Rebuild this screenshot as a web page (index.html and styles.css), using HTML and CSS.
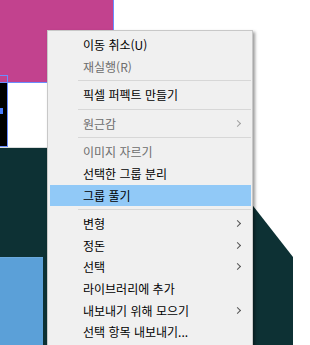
FILE: index.html
```html
<!DOCTYPE html>
<html lang="ko">
<head>
  <meta charset="UTF-8" />
  <title>Context menu</title>
  <link rel="stylesheet" href="styles.css">
</head>
<body>
  <div class="canvas">
    <div class="shape magenta"></div>
    <div class="shape black-box"></div>
    <div class="shape black-outline"></div>
    <div class="shape handle"></div>
    <div class="shape teal"></div>
    <div class="shape sky"></div>

    <div class="menu">
      <div class="item">이동 취소(U)</div>
      <div class="item disabled">재실행(R)</div>
      <div class="sep"></div>
      <div class="item">픽셀 퍼펙트 만들기</div>
      <div class="sep"></div>
      <div class="item disabled sub">원근감</div>
      <div class="sep"></div>
      <div class="item disabled">이미지 자르기</div>
      <div class="item">선택한 그룹 분리</div>
      <div class="item active">그룹 풀기</div>
      <div class="sep"></div>
      <div class="item sub">변형</div>
      <div class="item sub">정돈</div>
      <div class="item sub">선택</div>
      <div class="item">라이브러리에 추가</div>
      <div class="item sub">내보내기 위해 모으기</div>
      <div class="item">선택 항목 내보내기...</div>
    </div>
  </div>
</body>
</html>
```

FILE: styles.css
```css
* {
  margin: 0;
  padding: 0;
  box-sizing: border-box;
}

html, body {
  width: 100%;
  height: 100%;
  background: #fff;
  overflow: hidden;
}

.canvas {
  position: relative;
  width: 310px;
  height: 345px;
}

.shape {
  position: absolute;
}

.magenta {
  left: 0;
  top: 0;
  width: 114px;
  height: 83px;
  background: #c2428e;
  border-right: 1px solid #6a8cff;
  border-bottom: 1px solid #6a8cff;
}

.black-box {
  left: 0;
  top: 83px;
  width: 7px;
  height: 64px;
  background: #000;
}

.black-outline {
  left: -2px;
  top: 75px;
  width: 10px;
  height: 72px;
  border: 1px solid #6a8cff;
}

.handle {
  left: 0;
  top: 108px;
  width: 3px;
  height: 6px;
  background: #4a7cff;
}

.teal {
  left: 0;
  top: 147px;
  width: 293px;
  height: 198px;
  background: #0d3134;
  clip-path: polygon(0 0, 207px 0, 293px 110px, 293px 198px, 0 198px);
  border-top: 1px solid #d9dcdc;
}

.sky {
  left: 0;
  top: 257px;
  width: 43px;
  height: 88px;
  background: #5ba0d8;
  border-top: 1px solid #6aa9dc;
}

.menu {
  position: absolute;
  left: 47px;
  top: 30px;
  width: 206px;
  padding: 3px 0;
  background: #f0f0f0;
  border: 1px solid #c8c8c8;
  box-shadow: 2px 2px 3px rgba(0, 0, 0, 0.4);
  font-family: "Noto Sans CJK KR", "Noto Sans", sans-serif;
  font-size: 12px;
  color: #000;
}

.item {
  position: relative;
  height: 21.6px;
  line-height: 21.6px;
  margin: 0 1px 0 2px;
  padding-left: 33px;
}

.item.disabled {
  color: #6d6d6d;
}

.item.active {
  background: #91c9f7;
}

.item.sub::after {
  content: "";
  position: absolute;
  right: 11px;
  top: 8px;
  width: 4px;
  height: 4px;
  border-top: 1px solid #555;
  border-right: 1px solid #555;
  transform: rotate(45deg);
}

.item.disabled.sub::after {
  border-color: #a0a0a0;
}

.sep {
  height: 1px;
  margin: 3px 1px 3px 30px;
  background: #d7d7d7;
}
```
